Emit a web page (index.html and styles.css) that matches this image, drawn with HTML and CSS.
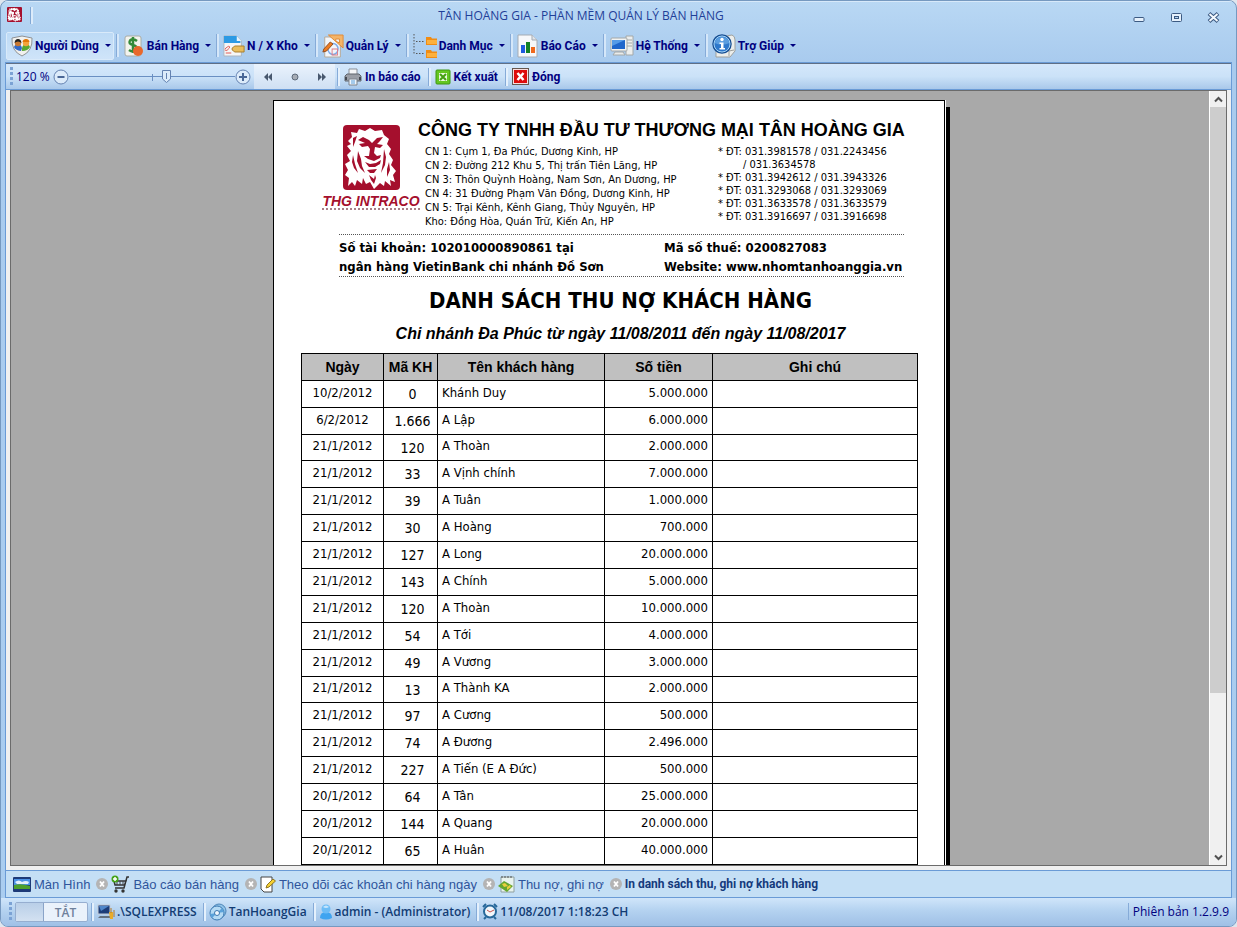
FILE: index.html
```html
<!DOCTYPE html>
<html lang="vi">
<head>
    <meta charset="UTF-8">
    <meta name="viewport" content="width=device-width, initial-scale=1.0">
    <title>TÂN HOÀNG GIA - PHẦN MỀM QUẢN LÝ BÁN HÀNG</title>
    <link rel="stylesheet" href="styles.css">
</head>
<body>
    <!-- Shared shapes -->
    <svg class="defs" width="0" height="0" aria-hidden="true">
        <symbol id="lion" viewBox="0 0 57 65" preserveAspectRatio="none">
            <rect width="57" height="65" rx="4" fill="#a50f2d"/>
            <path fill="#fff" d="M5 16 L9 12 L8 7 L14 8 L16 4 L22 6 L27 3 L32 6 L39 5 L41 10 L46 14 L44 19 L48 24 L46 29 L50 35 L48 40 L53 46 L50 50 L52 57 L47 55 L48 61 L42 56 L41 61 L37 58 L31 64 L27 57 L23 59 L20 53 L19 59 L14 55 L12 61 L9 57 L5 61 L6 53 L2 50 L5 45 L2 39 L7 36 L4 30 L8 26 L4 21 L8 19 Z"/>
            <path fill="#a50f2d" d="M15 15 L20 12 L26 15 L29 18 L34 13 L40 12 L37 16 L34 19 L40 20 L37 23 L32 22 L31 28 L34 31 L38 30 L37 33 L31 36 L25 34 L21 31 L26 31 L27 24 L25 21 L19 22 L16 19 L22 18 Z M22 37 L27 39 L33 38 L38 35 L37 39 L32 42 L26 42 Z M24 45 L34 44 L31 48 L27 48 Z M15 26 L18 34 L19 41 L22 48 L17 43 L14 36 Z M41 24 L43 32 L42 40 L38 48 L40 38 Z M10 30 L12 39 L15 48 L11 43 L9 37 Z M46 37 L47 45 L44 52 L44 44 Z M26 50 L28 55 L31 59 L33 53 L32 50 L31 54 Z M10 13 L14 11 L12 17 L10 22 Z"/>
        </symbol>
        <symbol id="close" viewBox="0 0 12 12">
            <circle cx="6" cy="6" r="6" fill="#b4b4b4"/>
            <path d="M4 3.500 L8 8.500 M8 3.500 L4 8.500" stroke="#fff" stroke-width="1.800"/>
        </symbol>
    </svg>

    <div class="window">
        <!-- Title bar -->
        <header class="title-bar">
            <div class="title-icon"><svg width="15" height="15"><use href="#lion"/></svg></div>
            <h1>TÂN HOÀNG GIA - PHẦN MỀM QUẢN LÝ BÁN HÀNG</h1>
            <div class="window-buttons">
                <button aria-label="Thu nhỏ"><svg width="13" height="13" viewBox="0 0 13 13"><rect x="1" y="6.500" width="10" height="4" rx="1" fill="#e6f1fc" stroke="#3c5a82"/></svg></button>
                <button aria-label="Phóng to"><svg width="13" height="13" viewBox="0 0 13 13"><rect x="1.500" y="2.500" width="10" height="8" rx="1" fill="#e6f1fc" stroke="#3c5a82"/><rect x="4.500" y="5.500" width="4" height="2" fill="#b4d4f1" stroke="#3c5a82"/></svg></button>
                <button aria-label="Đóng cửa sổ"><svg width="13" height="13" viewBox="0 0 13 13"><path d="M2 2.500 L11 10.500 M11 2.500 L2 10.500" stroke="#3c5a82" stroke-width="4"/><path d="M2.500 3 L10.500 10 M10.500 3 L2.500 10" stroke="#f3f8fd" stroke-width="2"/></svg></button>
            </div>
        </header>

        <!-- Main menu -->
        <nav class="menu-bar">
            <button class="menu-item active">
                <svg width="22" height="22" viewBox="0 0 22 22"><path d="M11 1 L21 3 Q22 16 11 21 Q0 16 1 3 Z" fill="#f1f1ee" stroke="#8e9296"/><path d="M3 12 Q4 9 7 9 Q10 9 11 13 L10 16 Q4 15 3 12" fill="#3269c8"/><path d="M11 13 Q12 9 15 9 Q18 9 19 12 Q17 16 11 16" fill="#58a832"/><circle cx="7" cy="8" r="3.200" fill="#c87832"/><path d="M3.500 8 Q4 4 7 4 Q10 4 10.500 8 Q7 5 3.500 8" fill="#222"/><circle cx="15" cy="8" r="3.200" fill="#f3a43c"/><path d="M11.500 7 Q12 4 15 4 Q18 4 18.500 7 Z" fill="#e27808"/></svg>
                <span>Người Dùng</span>
            </button>
            <button class="menu-item">
                <svg width="22" height="22" viewBox="0 0 22 22"><rect x="2" y="1" width="16" height="20" rx="2" fill="#f3f3ee" stroke="#a8aba4"/><path d="M14 6 Q10 3 7 5.500 Q5 9 10 10 Q15 11 13 15 Q10 18 6 15 M10 2 V18" fill="none" stroke="#348a3a" stroke-width="2.500"/><circle cx="15" cy="16" r="5" fill="#e8682c"/></svg>
                <span>Bán Hàng</span>
            </button>
            <button class="menu-item">
                <svg width="22" height="22" viewBox="0 0 24 22" preserveAspectRatio="none"><path d="M1 1 H15 L20 6 V21 H1 Z" fill="#f5f6f7" stroke="#aab4be"/><path d="M1 1 H15 L19 6 V8 H1 Z" fill="#2c9ae4"/><path d="M15 1 L20 6 H15 Z" fill="#e8f3fb"/><path d="M2 14 Q8 9 7 13 Q4 17 2 15 M3 18 H9" fill="none" stroke="#e05650"/><path d="M10 13 L13 11 H23 V17 H13 L10 15 Z" fill="#e8bd5c" stroke="#a87e2c"/></svg>
                <span>N / X Kho</span>
            </button>
            <button class="menu-item">
                <svg width="22" height="24" viewBox="0 0 24 24" preserveAspectRatio="none"><path d="M3 3 H20 V23 H3 Z" fill="#f2f6fb" stroke="#b7a894"/><circle cx="12" cy="15" r="5.500" fill="none" stroke="#7eaae8" stroke-width="1.500"/><rect x="11" y="15" width="6" height="6" fill="none" stroke="#e07a80"/><path d="M7 1 H23 V14 Z M15 5 V7 L19 9 V5 Z" fill="#f4b468" stroke="#e28a34" fill-rule="evenodd"/><path d="M1 18 L2 15 L9 8 L12 10 L5 17 Z" fill="#ee7c22" stroke="#8e4c20"/></svg>
                <span>Quản Lý</span>
            </button>
            <button class="menu-item">
                <svg width="24" height="24" viewBox="0 0 24 24"><path d="M1 0 V20 M3 7.500 H12 M3 19.500 H12" fill="none" stroke="#555" stroke-dasharray="1.500 1.500"/><path d="M13 3 H18 L19 4.500 H24 V11 H13 Z M13 16 H18 L19 17.500 H24 V24 H13 Z" fill="#f08c14"/><path d="M14 6 H24 V10 H14 Z M14 19 H24 V23 H14 Z" fill="#fdb03c"/></svg>
                <span>Danh Mục</span>
            </button>
            <button class="menu-item">
                <svg width="22" height="24" viewBox="0 0 22 24"><path d="M1 1 H15 L20 6 V23 H1 Z" fill="#f7f8fa" stroke="#a5abb3"/><path d="M15 1 V6 H20" fill="#dfe4ea" stroke="#a5abb3"/><path d="M4 11 H8 V19 H4 Z" fill="#1e5ae0"/><path d="M9 8 H13 V19 H9 Z" fill="#128026"/><path d="M14 13 H18 V19 H14 Z" fill="#f0681c"/></svg>
                <span>Báo Cáo</span>
            </button>
            <button class="menu-item">
                <svg width="24" height="22" viewBox="0 0 24 22"><path d="M16 1 H23 V20 H16 Z" fill="#eceeed" stroke="#a4a8a8"/><path d="M17 5 H22 M17 8 H22 M17 11 H22" stroke="#a4a8a8"/><rect x="1" y="3" width="16" height="13" rx="1" fill="#f1f3f3" stroke="#a4a8a8"/><path d="M2 5 H15 V14 H2 Z" fill="#1f66cb"/><path d="M2 5 H15 L2 11 Z" fill="#559be8"/><path d="M5 17 H13 L15 20 H3 Z" fill="#e9ebea" stroke="#a4a8a8"/></svg>
                <span>Hệ Thống</span>
            </button>
            <button class="menu-item">
                <svg width="24" height="24" viewBox="0 0 24 24"><path d="M8 3 L20 1 Q23 2 23 6 V17 L18 23 H4 V16 Z" fill="#eceeec" stroke="#9ea09d"/><path d="M17 22 V17 L22 16" fill="none" stroke="#9ea09d"/><circle cx="10" cy="10" r="9" fill="#2e78cb" stroke="#174e92" stroke-width="1.500"/><circle cx="10" cy="10" r="8" fill="none" stroke="#a6d4f6"/><path d="M2.500 9 Q4 3 10 3 Q16 3 17.500 9 Q10 12 2.500 9" fill="#78b6ec" opacity=".6"/><circle cx="10" cy="5.500" r="1.700" fill="#fff"/><path d="M7.500 8.500 H11.500 V14 H13 V15.500 H7.500 V14 H9 V10 H7.500 Z" fill="#fff"/></svg>
                <span>Trợ Giúp</span>
            </button>
        </nav>

        <div class="workspace">
            <!-- Report toolbar -->
            <div class="toolbar">
                <span class="grip"></span>
                <label class="zoom-value" for="zoom">120 %</label>
                <div class="zoom-control">
                    <button class="zoom-button" aria-label="Thu nhỏ trang"><svg width="16" height="16" viewBox="0 0 16 16"><circle cx="8" cy="8" r="7" fill="#dcebfa" stroke="#6482b0"/><path d="M4.500 8 H11.500" stroke="#4a6796" stroke-width="2"/></svg></button>
                    <input type="range" id="zoom" min="0" max="100" value="59">
                    <button class="zoom-button" aria-label="Phóng to trang"><svg width="16" height="16" viewBox="0 0 16 16"><circle cx="8" cy="8" r="7" fill="#dcebfa" stroke="#6482b0"/><path d="M4 8 H12 M8 4 V12" stroke="#4a6796" stroke-width="2"/></svg></button>
                </div>
                <div class="pager">
                    <button aria-label="Trang trước"><svg width="10" height="8" viewBox="0 0 10 8"><path d="M5 0 V8 L1 4 Z M9 0 V8 L5 4 Z" fill="#48586e"/></svg></button>
                    <button aria-label="Trang hiện tại"><svg width="8" height="8" viewBox="0 0 8 8"><circle cx="4" cy="4" r="3" fill="#a5acb5" stroke="#5d6a7a"/></svg></button>
                    <button aria-label="Trang sau"><svg width="10" height="8" viewBox="0 0 10 8"><path d="M1 0 V8 L5 4 Z M5 0 V8 L9 4 Z" fill="#48586e"/></svg></button>
                </div>
                <button class="tool">
                    <svg width="18" height="18" viewBox="0 0 18 18"><path d="M5 1 H13 V7 H5 Z" fill="#f5f6f8" stroke="#8a8f98"/><path d="M3 6 H15 L17 8 V13 H1 V8 Z" fill="#9a9ea6" stroke="#5f646d"/><path d="M1 9 H3 V12 H1 Z M15 9 H17 V12 H15 Z" fill="#454a52"/><path d="M5 11 H13 V17 H5 Z" fill="#eef5fc" stroke="#7d838c"/><path d="M7 13 H11 M7 15 H11" stroke="#5aa0dc"/></svg>
                    <span>In báo cáo</span>
                </button>
                <button class="tool">
                    <svg width="16" height="16" viewBox="0 0 16 16"><rect x="1" y="1" width="14" height="14" rx="1" fill="#64c620" stroke="#3e9614"/><rect x="4" y="4" width="8" height="8" fill="#e9f8dd"/><path d="M5 5 L11 11 M11 5 L5 11" stroke="#44a012" stroke-width="2"/></svg>
                    <span>Kết xuất</span>
                </button>
                <button class="tool">
                    <svg width="17" height="17" viewBox="0 0 17 17"><rect x=".5" y=".5" width="16" height="16" fill="#f7dede" stroke="#66574f"/><rect x="2" y="2" width="13" height="13" fill="#dd0c0c"/><path d="M5.500 5 L11.500 12 M11.500 5 L5.500 12" stroke="#fff" stroke-width="2.500"/></svg>
                    <span>Đóng</span>
                </button>
            </div>

            <!-- Report preview -->
            <main class="viewer">
                <div class="canvas">
                    <article class="paper">
                        <div class="letterhead">
                            <div class="logo">
                                <svg width="57" height="65" role="img" aria-label="THG Intraco"><use href="#lion"/></svg>
                                <strong>THG INTRACO</strong>
                                <small></small>
                            </div>
                            <div class="company">
                                <h2>CÔNG TY TNHH ĐẦU TƯ THƯƠNG MẠI TÂN HOÀNG GIA</h2>
                                <div class="branches">
                                    <ul class="addresses">
                                        <li>CN 1: Cụm 1, Đa Phúc, Dương Kinh, HP</li>
                                        <li>CN 2: Đường 212 Khu 5, Thị trấn Tiên Lãng, HP</li>
                                        <li>CN 3: Thôn Quỳnh Hoàng, Nam Sơn, An Dương, HP</li>
                                        <li>CN 4: 31 Đường Phạm Văn Đồng, Dương Kinh, HP</li>
                                        <li>CN 5: Trại Kênh, Kênh Giang, Thủy Nguyên, HP</li>
                                        <li>Kho: Đồng Hòa, Quán Trữ, Kiến An, HP</li>
                                    </ul>
                                    <ul class="phones">
                                        <li>* ĐT: 031.3981578 / 031.2243456</li>
                                        <li class="more">/ 031.3634578</li>
                                        <li>* ĐT: 031.3942612 / 031.3943326</li>
                                        <li>* ĐT: 031.3293068 / 031.3293069</li>
                                        <li>* ĐT: 031.3633578 / 031.3633579</li>
                                        <li>* ĐT: 031.3916697 / 031.3916698</li>
                                    </ul>
                                </div>
                            </div>
                        </div>

                        <div class="bank">
                            <p>Số tài khoản: 102010000890861 tại<br>ngân hàng VietinBank chi nhánh Đồ Sơn</p>
                            <p>Mã số thuế: 0200827083<br>Website: www.nhomtanhoanggia.vn</p>
                        </div>

                        <div class="report-heading">
                            <h2>DANH SÁCH THU NỢ KHÁCH HÀNG</h2>
                            <p>Chi nhánh Đa Phúc từ ngày 11/08/2011 đến ngày 11/08/2017</p>
                        </div>

                        <table class="debts">
                            <colgroup>
                                <col class="col-date">
                                <col class="col-code">
                                <col class="col-name">
                                <col class="col-amount">
                                <col>
                            </colgroup>
                            <thead>
                                <tr><th>Ngày</th><th>Mã KH</th><th>Tên khách hàng</th><th>Số tiền</th><th>Ghi chú</th></tr>
                            </thead>
                            <tbody>
                                <tr><td>10/2/2012</td><td>0</td><td>Khánh Duy</td><td>5.000.000</td><td></td></tr>
                                <tr><td>6/2/2012</td><td>1.666</td><td>A Lập</td><td>6.000.000</td><td></td></tr>
                                <tr><td>21/1/2012</td><td>120</td><td>A Thoàn</td><td>2.000.000</td><td></td></tr>
                                <tr><td>21/1/2012</td><td>33</td><td>A Vịnh chính</td><td>7.000.000</td><td></td></tr>
                                <tr><td>21/1/2012</td><td>39</td><td>A Tuân</td><td>1.000.000</td><td></td></tr>
                                <tr><td>21/1/2012</td><td>30</td><td>A Hoàng</td><td>700.000</td><td></td></tr>
                                <tr><td>21/1/2012</td><td>127</td><td>A Long</td><td>20.000.000</td><td></td></tr>
                                <tr><td>21/1/2012</td><td>143</td><td>A Chính</td><td>5.000.000</td><td></td></tr>
                                <tr><td>21/1/2012</td><td>120</td><td>A Thoàn</td><td>10.000.000</td><td></td></tr>
                                <tr><td>21/1/2012</td><td>54</td><td>A Tới</td><td>4.000.000</td><td></td></tr>
                                <tr><td>21/1/2012</td><td>49</td><td>A Vương</td><td>3.000.000</td><td></td></tr>
                                <tr><td>21/1/2012</td><td>13</td><td>A Thành KA</td><td>2.000.000</td><td></td></tr>
                                <tr><td>21/1/2012</td><td>97</td><td>A Cương</td><td>500.000</td><td></td></tr>
                                <tr><td>21/1/2012</td><td>74</td><td>A Đương</td><td>2.496.000</td><td></td></tr>
                                <tr><td>21/1/2012</td><td>227</td><td>A Tiến (E A Đức)</td><td>500.000</td><td></td></tr>
                                <tr><td>20/1/2012</td><td>64</td><td>A Tân</td><td>25.000.000</td><td></td></tr>
                                <tr><td>20/1/2012</td><td>144</td><td>A Quang</td><td>20.000.000</td><td></td></tr>
                                <tr><td>20/1/2012</td><td>65</td><td>A Huân</td><td>40.000.000</td><td></td></tr>
                            </tbody>
                        </table>
                    </article>
                </div>
                <div class="scrollbar">
                    <button aria-label="Cuộn lên"><svg width="9" height="7" viewBox="0 0 9 7"><path d="M1 5.500 L4.500 2 L8 5.500" fill="none" stroke="#505050" stroke-width="2"/></svg></button>
                    <div class="track"><div class="thumb"></div></div>
                    <button aria-label="Cuộn xuống"><svg width="9" height="7" viewBox="0 0 9 7"><path d="M1 1.500 L4.500 5 L8 1.500" fill="none" stroke="#505050" stroke-width="2"/></svg></button>
                </div>
            </main>

            <!-- Open windows -->
            <nav class="tabs">
                <a href="#">
                    <svg width="18" height="15" viewBox="0 0 18 15"><rect width="18" height="15" rx="1" fill="#1d3a78"/><path d="M1 2 H17 V8 H1 Z" fill="#4c92e6"/><path d="M2 5 Q6 2 9 5 Q13 3 16 5 L15 7 H4 Z" fill="#e4f0fb"/><path d="M1 8 Q8 6 17 9 V12 H1 Z" fill="#4ea02c"/></svg>
                    Màn Hình
                </a>
                <button class="tab-close" aria-label="Đóng"><svg width="12" height="12"><use href="#close"/></svg></button>
                <a href="#">
                    <svg width="19" height="18" viewBox="0 0 19 18"><path d="M18 2 H16 L13 13 H4 M3 6 H15 L13.500 10 H4 Z" fill="none" stroke="#333" stroke-width="1.500"/><path d="M6 6 V10 M9 6 V10 M12 6 V10" stroke="#444"/><circle cx="5" cy="16" r="1.700" fill="#333"/><circle cx="12" cy="16" r="1.700" fill="#333"/><circle cx="4" cy="4" r="3.500" fill="#45a318"/><path d="M2 4 H6 M4 2 V6" stroke="#fff" stroke-width="1.500"/></svg>
                    Báo cáo bán hàng
                </a>
                <button class="tab-close" aria-label="Đóng"><svg width="12" height="12"><use href="#close"/></svg></button>
                <a href="#">
                    <svg width="16" height="17" viewBox="0 0 16 17"><path d="M1 1 H12 V16 H4 L1 13 Z" fill="#fff" stroke="#444"/><path d="M6 12 L7 9 L13 3 L15.500 5 L9 11 Z" fill="#f5d032" stroke="#8e7420"/></svg>
                    Theo dõi các khoản chi hàng ngày
                </a>
                <button class="tab-close" aria-label="Đóng"><svg width="12" height="12"><use href="#close"/></svg></button>
                <a href="#">
                    <svg width="17" height="18" viewBox="0 0 17 18"><path d="M3 2 H16 V17 H3 Z" fill="#e9f3ee" stroke="#8fa0a0"/><path d="M4 1 V3 M7 1 V3 M10 1 V3 M13 1 V3" stroke="#555"/><path d="M0 11 L6 6 L15 11 L9 17 Z" fill="#64a62e"/><path d="M4 9 L7 8 L10 11 L6 12 Z M9 12 L12 10 L13 12 L9 15 Z" fill="#e9cf3e"/></svg>
                    Thu nợ, ghi nợ
                </a>
                <button class="tab-close" aria-label="Đóng"><svg width="12" height="12"><use href="#close"/></svg></button>
                <a href="#" class="current">In danh sách thu, ghi nợ khách hàng</a>
            </nav>
        </div>

        <!-- Status bar -->
        <footer class="status-bar">
            <span class="grip"></span>
            <button class="toggle" role="switch" aria-checked="false"><span class="knob"></span><span class="state">TẮT</span></button>
            <div class="status">
                <svg width="18" height="16" viewBox="0 0 18 16"><rect x="1" y="1" width="12" height="9" fill="#1c3c78" stroke="#c4ccd8"/><path d="M2 2 H12 L4 7 Z" fill="#4f86ca"/><path d="M3 12 H13 V14 H1 Z" fill="#64707e"/><path d="M12 8 H16 V15 H13 Z" fill="#e9ac2c"/><path d="M14 4 V9 M17 6 V13" stroke="#b0782a"/></svg>
                .\SQLEXPRESS
            </div>
            <div class="status">
                <svg width="18" height="18" viewBox="0 0 18 18"><circle cx="10" cy="8" r="7" fill="#8ec2e8" stroke="#4e86b8"/><circle cx="8" cy="10" r="7" fill="#b4daf4" stroke="#3c78b0"/><path d="M8 10 L13 5 L15 9 Z M8 10 L3 15 L1 11 Z" fill="#5aa2da"/><circle cx="8" cy="10" r="2.500" fill="#f2f8fd" stroke="#3c78b0"/></svg>
                TanHoangGia
            </div>
            <div class="status">
                <svg width="14" height="16" viewBox="0 0 14 16"><path d="M1 14 Q1 8 7 8 Q13 8 13 14 Q7 17 1 14" fill="#3fa4f0"/><circle cx="7" cy="5" r="4.500" fill="#6cbcf6"/><path d="M4 3 Q7 0 10 3 Q7 5 4 3" fill="#c4e5fd"/></svg>
                admin - (Administrator)
            </div>
            <div class="status">
                <svg width="16" height="17" viewBox="0 0 16 17"><path d="M1 4 L4 1 M12 1 L15 4 M4 14 L2 16 M12 14 L14 16" stroke="#27689a" stroke-width="2"/><circle cx="8" cy="8.500" r="6" fill="#f2f7fb" stroke="#27689a" stroke-width="2"/><path d="M5 7 L8 9 L12 7" fill="none" stroke="#c8504a"/></svg>
                11/08/2017 1:18:23 CH
            </div>
            <div class="version">Phiên bản 1.2.9.9</div>
        </footer>
    </div>
</body>
</html>
```

FILE: styles.css
```css
/* Styles */
* {
    box-sizing: border-box;
}

body {
    margin: 0;
    height: 100vh;
    background-color: #dfe6ee;
    font-family: "Open Sans", "Noto Sans", sans-serif;
    font-size: 12px;
    color: #000080;
}

button {
    font: inherit;
    color: inherit;
    padding: 0;
    border: none;
    background: none;
    cursor: pointer;
}

ul, h1, h2, p {
    margin: 0;
    padding: 0;
    list-style: none;
}

svg {
    display: block;
    flex: none;
}

.defs {
    position: absolute;
}

/* Window frame */
.window {
    height: 100%;
    display: flex;
    flex-direction: column;
    border: 1px solid #7699c0;
    border-radius: 8px;
    overflow: hidden;
    background: linear-gradient(#b9d8f4, #a9cbee 60px, #aacdf0);
}

.title-bar {
    height: 28px;
    display: flex;
    align-items: center;
    padding: 0 16px 0 6px;
    border-top: 1px solid #d7e9fa;
}

.title-bar h1 {
    flex: 1;
    padding-right: 94px;
    text-align: center;
    font-size: 12px;
    font-weight: normal;
    color: #1f3f98;
}

.title-icon {
    width: 116px;
    display: flex;
}

.title-icon::after {
    content: "";
    width: 2px;
    height: 17px;
    margin-left: 8px;
    border-left: 1px solid #82a9d6;
    background-color: #dcebfa;
}

.window-buttons {
    display: flex;
    gap: 24px;
    padding-top: 4px;
}

/* Menu */
.menu-bar {
    height: 33px;
    display: flex;
    align-items: center;
    padding: 0 5px;
}

.menu-item {
    height: 28px;
    display: flex;
    align-items: center;
    gap: 2px;
    padding-right: 5px;
    font: bold 12px Roboto, sans-serif;
    white-space: nowrap;
}

.menu-item::after {
    content: "";
    margin-left: 4px;
    border: 3px solid transparent;
    border-top-color: #000080;
    border-bottom: none;
}

.menu-item + .menu-item::before {
    content: "";
    width: 2px;
    height: 23px;
    margin-right: 2px;
    border-left: 1px solid #86abd8;
    background-color: #d5e7f9;
}

.menu-item.active {
    padding: 0 2px 0 4px;
    margin-right: 2px;
    border: 1px solid #d9eafa;
    border-radius: 2px;
    background: linear-gradient(#bddaf5, #cfe4f9);
}

/* Workspace */
.workspace {
    flex: 1;
    min-height: 0;
    display: flex;
    flex-direction: column;
    margin: 0 4px;
    border: 1px solid #6a9bd6;
    background-color: #f0f0f0;
}

.toolbar {
    height: 27px;
    display: flex;
    align-items: center;
    padding-left: 4px;
    border-top: 1px solid #5f6f86;
    border-bottom: 1px solid #6a9bd6;
    background: linear-gradient(#d4e7fb, #cbe2f8 50%, #a9c8ea);
}

.grip {
    width: 3px;
    height: 19px;
    margin-right: 3px;
    background: repeating-linear-gradient(#7ba2d4 0 3px, transparent 3px 5px);
}

.zoom-value {
    width: 37px;
}

.zoom-control {
    display: flex;
    align-items: center;
}

.zoom-control input {
    appearance: none;
    width: 166px;
    height: 16px;
    margin: 0;
    background:
        linear-gradient(#6a8fc2, #6a8fc2) 83px 5px / 1px 7px no-repeat,
        linear-gradient(#6a8fc2, #6a8fc2) 0 7px / 100% 1px no-repeat;
}

.zoom-control input::-webkit-slider-thumb {
    appearance: none;
    width: 9px;
    height: 13px;
    background: url("data:image/svg+xml,%3Csvg xmlns='http://www.w3.org/2000/svg' viewBox='0 0 9 13'%3E%3Cpath d='M.5 .5 H8.500 V9 L4.500 12.500 L.5 9 Z' fill='%23dcebfa' stroke='%236482b0'/%3E%3Cpath d='M4.500 3 V9' stroke='%236482b0'/%3E%3C/svg%3E");
}

.pager {
    align-self: stretch;
    display: flex;
    margin: 0 2px 0 3px;
    background: linear-gradient(#eaf3fd, #cfe0f3);
}

.pager button {
    width: 27px;
    display: flex;
    align-items: center;
    justify-content: center;
}

.tool {
    display: flex;
    align-items: center;
    gap: 3px;
    padding-right: 7px;
    font: bold 12px Roboto, sans-serif;
    white-space: nowrap;
}

.tool::before,
.status::before {
    content: "";
    width: 2px;
    height: 18px;
    margin-right: 1px;
    border-left: 1px solid #86abd8;
    background-color: #e4f0fc;
}

/* Viewer */
.viewer {
    flex: 1;
    min-height: 0;
    display: flex;
    margin: 0 4px 4px;
    border: 1px solid #6b6b6b;
    background-color: #a9a9a9;
}

.canvas {
    flex: 1;
    overflow: hidden;
    padding: 9px 2px 0 0;
}

.paper {
    width: 672px;
    min-height: 900px;
    margin: 0 auto;
    padding: 18px 26px 0 27px;
    border: 1px solid #000;
    background-color: #fff;
    box-shadow: 1px 0 #fff, 5px 7px #000;
    color: #000;
}

/* Letterhead */
.letterhead {
    display: flex;
    padding-left: 21px;
}

.logo {
    width: 98px;
    display: flex;
    flex-direction: column;
    align-items: center;
    padding-top: 6px;
}

.logo strong {
    margin-top: 4px;
    font: italic bold 14px/14px "Liberation Sans", sans-serif;
    color: #a50f2d;
    white-space: nowrap;
}

.logo small {
    width: 98px;
    border-top: 2px dotted #a87f88;
}

.company h2 {
    margin-left: -2px;
    font: bold 18px/22px "Liberation Sans", sans-serif;
    white-space: nowrap;
}

.branches {
    display: flex;
    justify-content: space-between;
    padding: 4px 18px 0 5px;
    font-family: "DejaVu Sans Condensed", "DejaVu Sans", sans-serif;
    font-size: 11px;
    white-space: nowrap;
}

.addresses {
    line-height: 14px;
}

.phones {
    line-height: 13px;
}

.phones .more {
    padding-left: 25px;
}

.bank {
    display: grid;
    grid-template-columns: 325px 1fr;
    margin: 5px 14px 0 38px;
    padding-top: 3px;
    border-top: 1px dotted #555;
    border-bottom: 1px dotted #555;
    font: bold 13px/19px "DejaVu Sans Condensed", "DejaVu Sans", sans-serif;
    white-space: nowrap;
}

.report-heading {
    padding: 9px 0 9px 22px;
    text-align: center;
}

.report-heading h2 {
    font: bold 22px/30px "DejaVu Sans Condensed", "DejaVu Sans", sans-serif;
}

.report-heading p {
    margin-top: 8px;
    font: italic bold 16px/20px "Liberation Sans", sans-serif;
}

/* Report table */
.debts {
    width: 617px;
    table-layout: fixed;
    border-collapse: collapse;
    font: 13px/16px "DejaVu Sans Condensed", "DejaVu Sans", sans-serif;
}

.col-date { width: 82px; }
.col-code { width: 54px; }
.col-name { width: 167px; }
.col-amount { width: 108px; }

.debts th, .debts td {
    height: 27px;
    padding: 0 4px;
    border: 1px solid #000;
    white-space: nowrap;
}

.debts th {
    padding: 0;
    background-color: #c0c0c0;
    font: bold 14px/16px "Liberation Sans", sans-serif;
}

.debts td {
    padding-bottom: 3px;
}

.debts tr:nth-child(9n + 3) td {
    height: 26px;
}

.debts td:nth-child(1) { text-align: center; }
.debts td:nth-child(2) { padding: 0 0 0 4px; text-align: center; font-size: 14px; }
.debts td:nth-child(4) { text-align: right; }

/* Scrollbar */
.scrollbar {
    width: 17px;
    display: flex;
    flex-direction: column;
    border-left: 1px solid #fff;
    background-color: #f0f0f0;
}

.scrollbar button {
    height: 16px;
    display: flex;
    align-items: center;
    justify-content: center;
}

.track {
    flex: 1;
}

.thumb {
    height: 79%;
    background-color: #cdcdcd;
}

/* Tabs */
.tabs {
    height: 27px;
    display: flex;
    align-items: center;
    padding-left: 7px;
    border-top: 1px solid #6a9bd6;
    background-color: #c4dff5;
    white-space: nowrap;
}

.tabs a {
    display: flex;
    align-items: center;
    gap: 3px;
    font: 13px "Liberation Sans", sans-serif;
    color: #2f559c;
    text-decoration: none;
}

.tab-close {
    margin: 0 3px 0 6px;
}

.tabs .current {
    font: bold 12px Roboto, sans-serif;
    color: #143a7c;
}

/* Status bar */
.status-bar {
    height: 28px;
    display: flex;
    align-items: center;
    padding: 0 7px 1px 8px;
    background: linear-gradient(#d0e5fa, #b4d2f0 45%, #9fc0e6);
    font-weight: 600;
    color: #123c74;
    white-space: nowrap;
}

.toggle {
    width: 73px;
    height: 20px;
    display: flex;
    margin-right: 3px;
    border: 1px solid #96aed0;
    border-radius: 2px;
    background-color: #eaf2fb;
    color: #6f819b;
}

.knob {
    width: 28px;
    height: 18px;
    border-right: 1px solid #8aa4c8;
    background: linear-gradient(#b9cfe8, #d3e1f1);
}

.state {
    flex: 1;
    line-height: 19px;
}

.status {
    display: flex;
    align-items: center;
    gap: 2px;
    padding-right: 6px;
}

.version {
    margin-left: auto;
    padding-left: 4px;
    border-left: 1px solid #86abd8;
    font-weight: normal;
    color: #000080;
}
```
